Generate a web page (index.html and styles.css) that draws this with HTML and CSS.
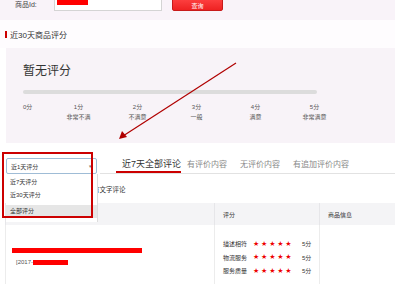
FILE: index.html
```html
<!DOCTYPE html>
<html lang="zh-CN">
<head>
    <meta charset="UTF-8">
    <meta name="viewport" content="width=device-width, initial-scale=1.0">
    <title>商品评价</title>
    <link rel="stylesheet" href="styles.css">
</head>
<body>
    <div class="page">
        <div class="search-bar">
            <span class="field-label">商品Id:</span>
            <div class="id-input"><span class="redact"></span></div>
            <button class="search-btn">查询</button>
        </div>

        <div class="score-title"><span class="mark"></span>近30天商品评分</div>

        <div class="score-panel">
            <div class="no-score">暂无评分</div>
            <div class="score-bar"></div>
            <div class="scale">
                <div class="tick first">0分</div>
                <div class="tick">1分<br>非常不满</div>
                <div class="tick">2分<br>不满意</div>
                <div class="tick">3分<br>一般</div>
                <div class="tick">4分<br>满意</div>
                <div class="tick">5分<br>非常满意</div>
            </div>
        </div>

        <div class="review-bar">
            <div class="range-select">
                <span>近1天评分</span>
                <span class="caret">▾</span>
                <ul class="range-list">
                    <li>近7天评分</li>
                    <li>近30天评分</li>
                    <li class="hover">全部评分</li>
                </ul>
            </div>
            <div class="tabs">
                <span class="tab active">近7天全部评论</span>
                <span class="tab">有评价内容</span>
                <span class="tab">无评价内容</span>
                <span class="tab">有追加评价内容</span>
            </div>
        </div>

        <div class="filter-row">
            <span class="check"></span>有文字评论
        </div>

        <table class="review-table">
            <thead>
                <tr>
                    <th class="col-content"></th>
                    <th class="col-score">评分</th>
                    <th>商品信息</th>
                </tr>
            </thead>
            <tbody>
                <tr>
                    <td class="col-content">
                        <div class="redact-line"></div>
                        <div class="review-date">[2017-<span class="redact-date"></span></div>
                    </td>
                    <td class="col-score">
                        <div class="rate-row"><span class="rate-name">描述相符</span><span class="stars">★★★★★</span><span>5分</span></div>
                        <div class="rate-row"><span class="rate-name">物流服务</span><span class="stars">★★★★★</span><span>5分</span></div>
                        <div class="rate-row"><span class="rate-name">服务质量</span><span class="stars">★★★★★</span><span>5分</span></div>
                    </td>
                    <td></td>
                </tr>
            </tbody>
        </table>

        <!-- annotation drawn over the screenshot -->
        <div class="note-box"></div>
        <svg class="note-arrow" width="395" height="284" viewBox="0 0 395 284">
            <line x1="236" y1="63" x2="123" y2="136" stroke="#b00000" stroke-width="1.2"/>
            <polygon points="119,139 122,131 127,137" fill="#b00000"/>
        </svg>
    </div>
</body>
</html>
```

FILE: styles.css
```css
body {
    margin: 0;
    font-family: "Liberation Sans", "Noto Sans CJK SC", sans-serif;
    color: #333;
    background-color: #fff;
    overflow: hidden;
}
.page {
    position: relative;
    width: 395px;
    height: 284px;
    overflow: hidden;
}

/* search row, scrolled half out of view */
.search-bar {
    display: flex;
    align-items: center;
    height: 20px;
    padding-left: 15px;
    background-color: #f9f3f9;
}
.search-bar > * {
    flex: none;
    margin-top: -12px;
}
.field-label {
    width: 27px;
    font-size: 7px;
    color: #444;
}
.id-input {
    box-sizing: border-box;
    width: 108px;
    height: 14px;
    margin-left: 12px;
    border: 1px solid #d4d4d4;
    background: #fff;
}
.redact {
    display: block;
    width: 31px;
    height: 7px;
    margin: 0 0 0 2px;
    background: #f00;
}
.search-btn {
    box-sizing: border-box;
    width: 51px;
    height: 14px;
    margin-left: 10px;
    padding: 4px 0 0;
    border: 1px solid #c81a1a;
    border-radius: 2px;
    background: linear-gradient(#f44, #e22);
    color: #fff;
    font-family: inherit;
    font-size: 6px;
    line-height: 8px;
}

.score-title {
    display: flex;
    align-items: center;
    height: 28px;
    padding-left: 5px;
    background-color: #fefcfe;
    font-size: 8px;
}
.mark {
    width: 2px;
    height: 7px;
    margin-right: 3px;
    background: #c00;
}

.score-panel {
    height: 95px;
    margin-left: 6px;
    padding-left: 17px;
    background-color: #f8f3f8;
}
.no-score {
    padding-top: 15px;
    font-size: 12px;
    line-height: 16px;
}
.score-bar {
    width: 294px;
    height: 4px;
    margin-top: 11px;
    border-radius: 2px;
    background: #dcdcdc;
}
.scale {
    display: flex;
    margin-top: 8px;
    font-size: 6px;
    line-height: 10px;
    color: #555;
}
.tick {
    width: 59px;
    text-align: center;
}
.tick.first {
    width: 26px;
    text-align: left;
}

.review-bar {
    display: flex;
    align-items: flex-end;
    margin-top: 13px;
    padding-left: 6px;
}
.range-select {
    position: relative;
    display: flex;
    flex: none;
    align-items: center;
    justify-content: space-between;
    box-sizing: border-box;
    width: 91px;
    height: 16px;
    padding: 0 4px;
    border: 1px solid #9fbcd6;
    border-radius: 2px;
    background: #fff;
    font-size: 6px;
}
.caret {
    font-size: 5px;
    color: #777;
}
.range-list {
    position: absolute;
    top: 15px;
    left: -1px;
    width: 91px;
    height: 46px;
    margin: 0;
    padding: 2px 0 0;
    list-style: none;
    border-right: 1px solid #ddd;
    background: #fff;
    z-index: 2;
}
.range-list li {
    height: 13px;
    padding-left: 4px;
    line-height: 13px;
}
.range-list li.hover {
    margin-top: 3px;
    background: #e6e6e6;
}
.tabs {
    display: flex;
    flex: 1;
    height: 17px;
    margin-left: 3px;
    padding-left: 16px;
    border-bottom: 1px solid #e2e2e2;
}
.tab {
    flex: none;
    width: 53px;
    font-size: 8px;
    line-height: 17px;
    color: #888;
    white-space: nowrap;
}
.tab:last-child {
    width: auto;
}
.tab.active {
    box-sizing: border-box;
    width: 65px;
    margin-right: 6px;
    padding-left: 6px;
    border-bottom: 2px solid #c00;
    font-size: 9px;
    color: #333;
}

.filter-row {
    display: flex;
    align-items: center;
    height: 29px;
    padding-left: 82px;
    font-size: 6.5px;
}
.check {
    width: 6px;
    height: 6px;
    margin-right: 3px;
    border: 1px solid #aaa;
}

.review-table {
    width: 390px;
    margin-left: 5px;
    border-collapse: collapse;
    font-size: 6px;
}
.review-table th {
    height: 22px;
    padding: 0 0 0 8px;
    background: #f4f4f6;
    font-weight: normal;
    text-align: left;
    border-left: 1px solid #e6e6e9;
}
.review-table td {
    height: 70px;
    vertical-align: top;
    border-left: 1px solid #ececec;
}
.col-content {
    width: 200px;
}
.col-score {
    width: 95px;
    padding-left: 8px;
}
.redact-line {
    width: 130px;
    height: 5px;
    margin: 22px 0 0 5px;
    background: #f00;
}
.review-date {
    display: flex;
    align-items: center;
    margin: 6px 0 0 9px;
    color: #555;
}
.redact-date {
    width: 35px;
    height: 5px;
    background: #f00;
}
td.col-score {
    padding-top: 12px;
}
.rate-row {
    display: flex;
    align-items: center;
    height: 13.5px;
}
.rate-name {
    width: 30px;
}
.stars {
    width: 49px;
    font-family: "DejaVu Sans", sans-serif;
    font-size: 7px;
    letter-spacing: 1.8px;
    color: #e00;
}

/* red annotation over the select */
.note-box {
    position: absolute;
    top: 152px;
    left: 2px;
    width: 87px;
    height: 62px;
    border: 2px solid #c00;
    z-index: 3;
}
.note-arrow {
    position: absolute;
    top: 0;
    left: 0;
    z-index: 3;
}
```
